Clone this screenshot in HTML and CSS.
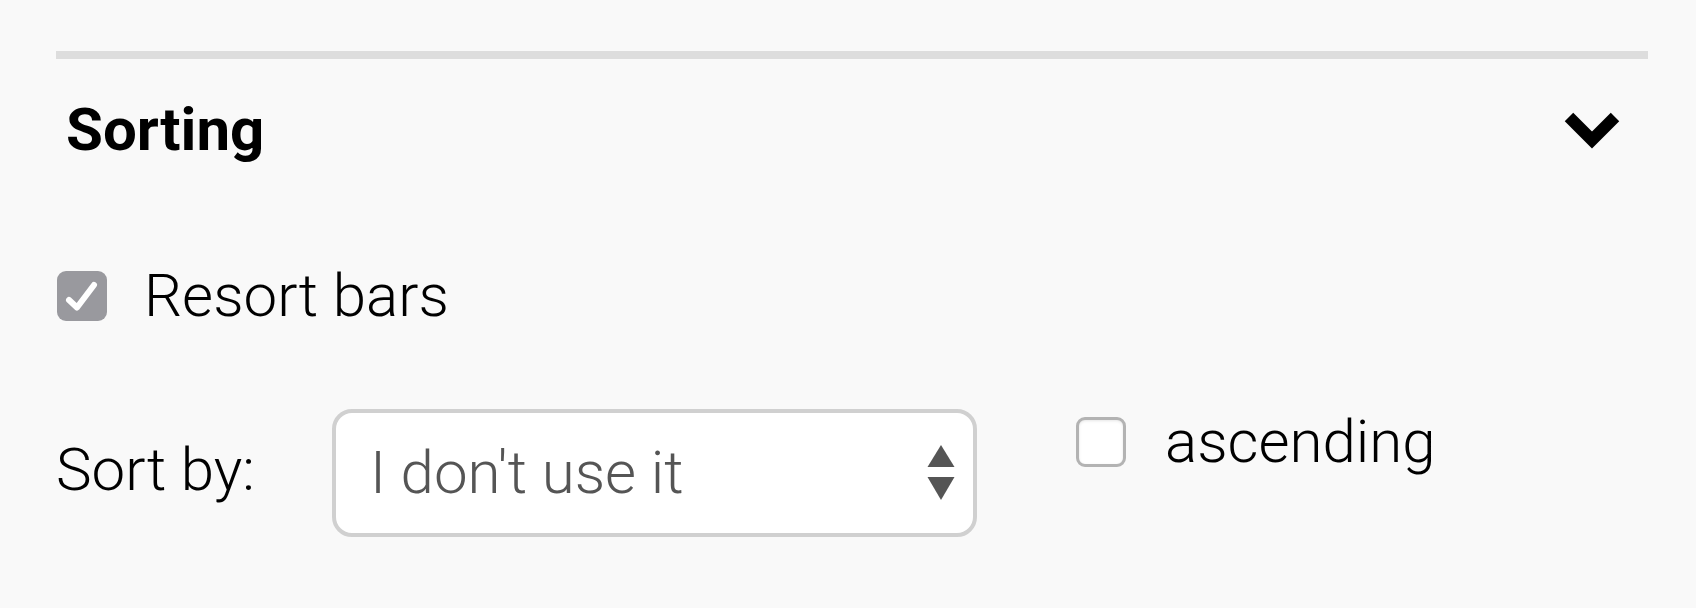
FILE: index.html
```html
<!DOCTYPE html>
<html lang="en">
<head>
<meta charset="utf-8">
<title>Sorting</title>
<link rel="stylesheet" href="styles.css">
</head>
<body>
<section class="panel">
  <div class="divider"></div>
  <div class="header">
    <h2 class="title">Sorting</h2>
    <svg class="chevron" width="56" height="37" viewBox="0 0 56 37" aria-hidden="true">
      <polyline points="5,5 28,28 51,5" fill="none" stroke="#000" stroke-width="12" stroke-linejoin="miter"/>
    </svg>
  </div>
  <label class="check-row">
    <span class="box checked">
      <svg width="50" height="50" viewBox="0 0 50 50" aria-hidden="true">
        <polyline points="12,29 20,36.5 37,14" fill="none" stroke="#fff" stroke-width="6" stroke-linecap="round" stroke-linejoin="round"/>
      </svg>
    </span>
    <span class="check-text">Resort bars</span>
  </label>
  <div class="sort-row">
    <span class="sort-label">Sort by:</span>
    <div class="select">
      <span class="select-value">I don't use it</span>
      <svg class="arrows" width="28" height="56" viewBox="0 0 28 56" aria-hidden="true">
        <polygon points="14,0 27.5,22 0.5,22" fill="#555"/>
        <polygon points="0.5,32 27.5,32 14,55" fill="#555"/>
      </svg>
    </div>
    <label class="check-row asc">
      <span class="box"></span>
      <span class="check-text">ascending</span>
    </label>
  </div>
</section>
</body>
</html>
```

FILE: styles.css
```css
html, body {
  margin: 0;
  padding: 0;
  background: #f9f9f9;
}

body {
  font-family: Roboto, "Liberation Sans", Arial, sans-serif;
  color: #000;
}

.panel {
  padding: 51px 48px 0 56px;
}

.divider {
  height: 8px;
  background: #dddddd;
}

.header {
  display: flex;
  align-items: center;
  justify-content: space-between;
  margin-top: 41px;
  height: 60px;
  padding-left: 10px;
  padding-right: 28px;
}

.title {
  margin: 0;
  font-size: 60px;
  line-height: 60px;
  font-weight: 700;
  color: #000;
}

.chevron {
  display: block;
  margin-top: 1px;
}

.check-row {
  display: flex;
  align-items: center;
  gap: 37px;
  height: 72px;
  margin-top: 100px;
}

.box {
  width: 50px;
  height: 50px;
  box-sizing: border-box;
  border-radius: 9px;
  border: 3px solid #b3b3b3;
  background: #fff;
  box-shadow: inset 0 1px 3px rgba(0,0,0,0.1);
  flex: none;
  display: block;
  margin-left: 1px;
}

.box.checked {
  border: none;
  background: #99999e;
  box-shadow: none;
}

.box svg {
  display: block;
}

.check-text {
  font-size: 60px;
  font-weight: 300;
  line-height: 72px;
  color: #000;
}

.sort-row {
  display: flex;
  align-items: flex-start;
  margin-top: 77px;
}

.sort-label {
  width: 276px;
  align-self: center;
  font-size: 60px;
  font-weight: 300;
  line-height: 72px;
  color: #000;
  margin-top: -6px;
}

.select {
  width: 645px;
  height: 128px;
  box-sizing: border-box;
  border: 4px solid #d0d0d0;
  border-radius: 20px;
  background: #fff;
  display: flex;
  align-items: center;
  justify-content: space-between;
  padding: 0 18px 0 34px;
}

.select-value {
  font-size: 60px;
  font-weight: 300;
  color: #555;
  line-height: 72px;
}

.arrows {
  display: block;
}

.check-row.asc {
  gap: 39px;
  margin-top: -3px;
  margin-left: 99px;
}

.check-row.asc .box {
  margin-left: 0;
}
```
